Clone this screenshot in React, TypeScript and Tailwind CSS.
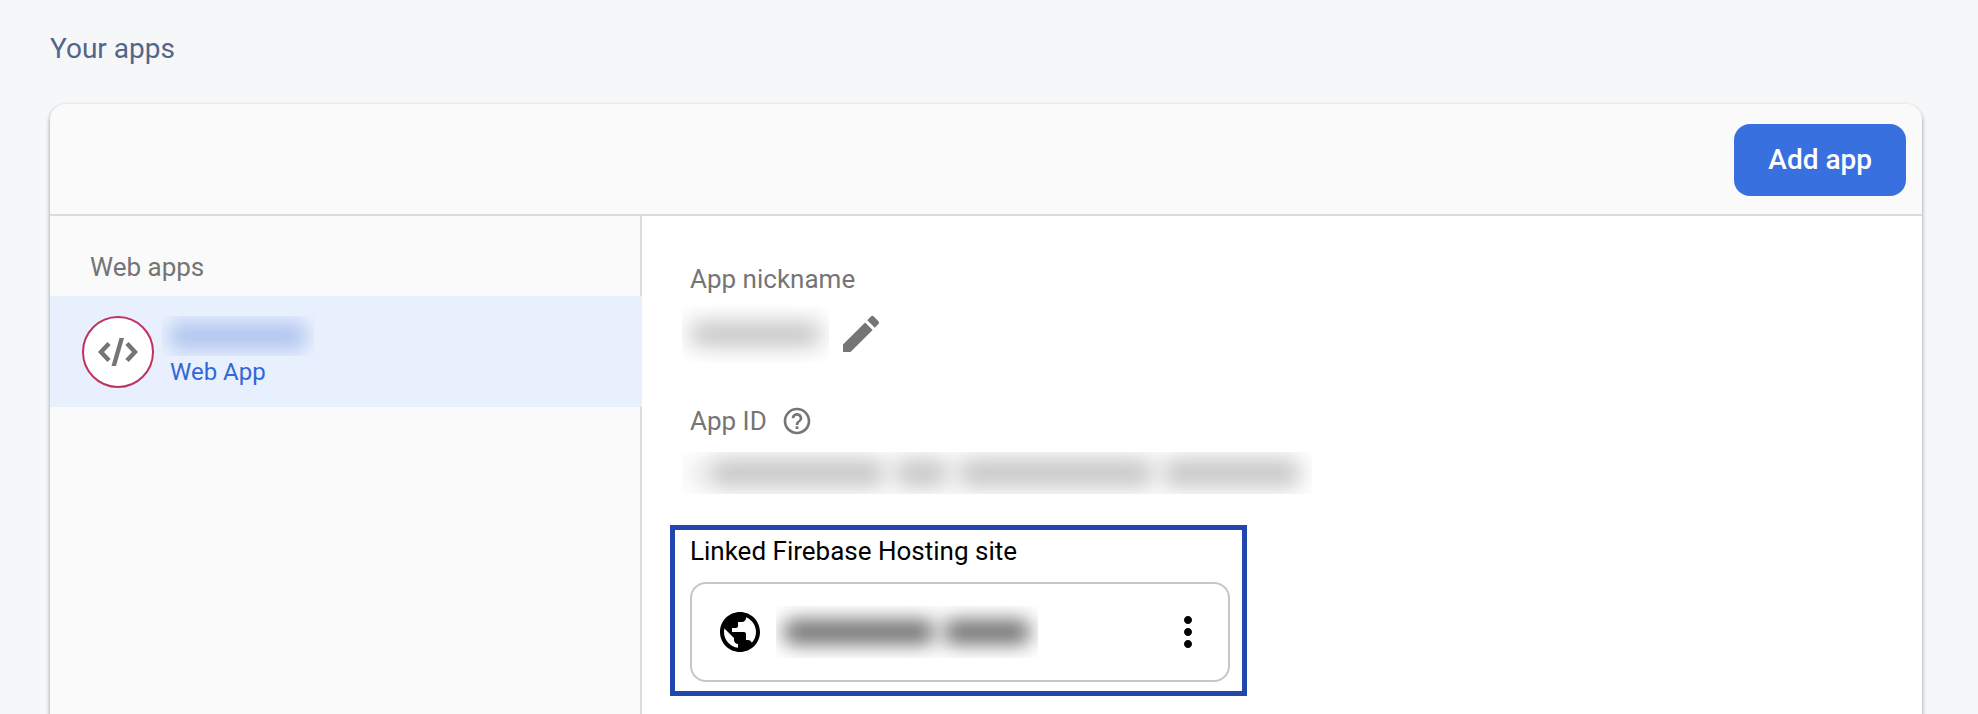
import { MdEdit, MdHelpOutline, MdMoreVert, MdPublic } from 'react-icons/md';

interface RedactedProps {
  label: string;
  // Box the blur is clipped to
  className: string;
  // Tint and blur of the bars inside the box
  barClassName: string;
  // Relative lengths of the hidden words
  words?: number[];
}

function Redacted({ label, className, barClassName, words = [1] }: RedactedProps) {
  return (
    <div role="img" aria-label={label} className={`flex items-center overflow-hidden ${className}`}>
      {words.map((grow, i) => (
        <div key={i} className={`rounded-lg ${barClassName}`} style={{ flexGrow: grow }} />
      ))}
    </div>
  );
}

function CodeIcon() {
  return (
    <svg viewBox="0 0 40 28" className="h-7 w-10 text-[#757575]" fill="none" aria-hidden="true">
      <path d="M11 5.5 3 14l8 8.5M29 5.5l8 8.5-8 8.5" stroke="currentColor" strokeWidth="4.5" />
      <path d="M13.5 28h4.5l8-28h-4.5z" fill="currentColor" />
    </svg>
  );
}

function Sidebar() {
  return (
    <nav aria-label="Web apps" className="w-[592px] shrink-0 border-r-2 border-[#dcdcdc] bg-[#fafafa] pt-8">
      <h2 className="pl-10 text-[26px] leading-[38px] text-[#757575]">Web apps</h2>
      <button
        type="button"
        aria-current="true"
        className="mt-2.5 flex h-[111px] w-[592px] items-center gap-4 bg-[#e8f0fe] pl-8 text-left"
      >
        <span className="flex size-[72px] shrink-0 items-center justify-center rounded-full border-2 border-[#c2305f] bg-white">
          <CodeIcon />
        </span>
        <span className="flex flex-col">
          <Redacted label="App name" className="-ml-2 h-10 w-[152px] px-2" barClassName="h-7 bg-[#b3c6ef] blur-[9px]" />
          <span className="text-2xl leading-8 text-[#3367d6]">Web App</span>
        </span>
      </button>
    </nav>
  );
}

function AppDetails() {
  return (
    <section className="flex flex-1 flex-col items-start bg-white pl-12 pt-11">
      <h3 className="text-[26px] leading-[38px] text-[#757575]">App nickname</h3>
      <div className="-ml-2 mt-2 flex items-center gap-2">
        <Redacted label="App nickname" className="h-14 w-[147px] px-2" barClassName="h-6 bg-[#c2c2c2] blur-[11px]" />
        <button type="button" aria-label="Edit nickname">
          <MdEdit className="size-12 text-[#757575]" />
        </button>
      </div>

      <div className="mt-10 flex items-center gap-3.5">
        <h3 className="text-[26px] leading-[38px] text-[#757575]">App ID</h3>
        <button type="button" aria-label="What is the app ID?">
          <MdHelpOutline className="size-8 text-[#757575]" />
        </button>
      </div>
      <Redacted
        label="App ID"
        className="-ml-2 mt-3 h-[42px] w-[630px] gap-2.5 px-3"
        barClassName="h-7 bg-[#c4c4c4] blur-[11px]"
        words={[1, 36, 11, 40, 28]}
      />

      <div className="-ml-5 mt-[31px] w-[577px] border-[5px] border-[#2146ad] pb-[9px] pl-[15px] pr-3 pt-0.5">
        <h3 className="text-[26px] leading-[38px] text-black">Linked Firebase Hosting site</h3>
        <div className="mt-3 flex h-[100px] items-center rounded-2xl border-2 border-[#c6c6c6] pl-6 pr-4">
          <MdPublic className="size-12 text-black" />
          <Redacted
            label="Hosting site"
            className="ml-3 h-[52px] w-[262px] gap-2.5 px-2"
            barClassName="h-6 bg-[#6a6a6a] blur-[10px]"
            words={[14, 8]}
          />
          <button type="button" aria-label="Site options" className="ml-auto">
            <MdMoreVert className="size-12 text-black" />
          </button>
        </div>
      </div>
    </section>
  );
}

export default function App() {
  return (
    <main className="h-screen overflow-hidden bg-[#f5f7f9] pl-[50px] pr-14 font-[Roboto,sans-serif]">
      <h1 className="pb-[34px] pt-7 text-[28px] leading-[42px] text-[#53658a]">Your apps</h1>
      <div className="overflow-hidden rounded-t-2xl shadow-[0_2px_4px_rgba(0,0,0,0.4)]">
        <header className="flex justify-end border-b-2 border-[#dcdcdc] bg-[#fafafa] px-4 pb-[18px] pt-5">
          <button type="button" className="h-[72px] rounded-2xl bg-[#3870e0] px-[34px] text-[28px] font-medium text-white">
            Add app
          </button>
        </header>
        <div className="flex min-h-[600px]">
          <Sidebar />
          <AppDetails />
        </div>
      </div>
    </main>
  );
}
